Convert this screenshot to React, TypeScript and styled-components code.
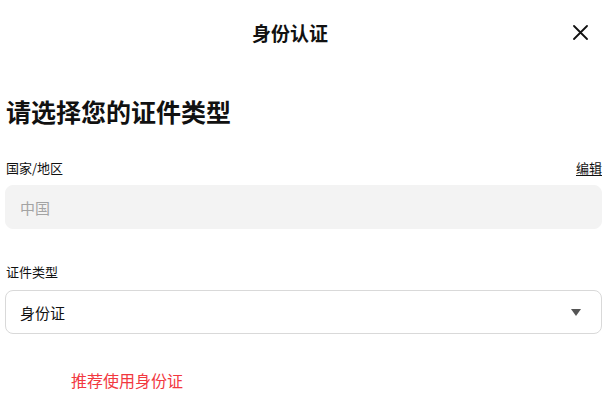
import React, { useState } from 'react';
import styled, { createGlobalStyle } from 'styled-components';

const GlobalStyle = createGlobalStyle`
  html, body {
    margin: 0;
    padding: 0;
    background: #ffffff;
  }
  body {
    font-family: "Noto Sans CJK SC", "Noto Sans", sans-serif;
    color: #1a1a1a;
  }
`;

const Page = styled.div`
  width: 609px;
  min-height: 409px;
  box-sizing: border-box;
  padding: 0 7px 0 5px;
`;

const Header = styled.div`
  display: flex;
  align-items: center;
  height: 64px;
  margin: 0 -7px 0 -5px;
  padding-left: 8px;
`;

const Title = styled.div`
  flex: 1;
  text-align: center;
  font-size: 19px;
  font-weight: 700;
  color: #111;
`;

const CloseButton = styled.button`
  margin-right: 21px;
  width: 16px;
  height: 16px;
  padding: 0;
  border: none;
  background: none;
  cursor: pointer;
  display: flex;
  align-items: center;
  justify-content: center;
  color: #111;
`;

const Heading = styled.h1`
  margin: 29px 0 0 1px;
  font-size: 25px;
  line-height: 36px;
  font-weight: 700;
  color: #111;
`;

const LabelRow = styled.div<{ $gap: number }>`
  display: flex;
  justify-content: space-between;
  align-items: center;
  margin: ${p => p.$gap}px 0 0 1px;
  font-size: 13px;
  line-height: 18px;
  color: #111;
`;

const EditLink = styled.a`
  color: #111;
  text-decoration: underline;
  text-underline-offset: 2px;
  cursor: pointer;
`;

const Field = styled.div<{ $disabled?: boolean; $gap: number }>`
  display: flex;
  align-items: center;
  justify-content: space-between;
  box-sizing: border-box;
  height: 44px;
  margin-top: ${p => p.$gap}px;
  padding: 0 20px 0 14px;
  border-radius: 8px;
  font-size: 15px;
  background: ${p => (p.$disabled ? '#f3f3f3' : '#ffffff')};
  border: 1px solid ${p => (p.$disabled ? '#f3f3f3' : '#d9d9d9')};
  color: ${p => (p.$disabled ? '#a3a3a3' : '#111')};
  cursor: ${p => (p.$disabled ? 'default' : 'pointer')};
`;

const Caret = styled.span`
  width: 0;
  height: 0;
  border-left: 5px solid transparent;
  border-right: 5px solid transparent;
  border-top: 7px solid #555;
`;

const Hint = styled.div`
  margin: 35px 0 0 66px;
  font-size: 16px;
  line-height: 22px;
  color: #f2383f;
`;

const App = () => {
  const [docType] = useState('身份证');

  return (
    <>
      <GlobalStyle />
      <Page>
        <Header>
          <Title>身份认证</Title>
          <CloseButton aria-label="关闭">
            <svg width="15" height="15" viewBox="0 0 15 15" fill="none">
              <path d="M1 1L14 14M14 1L1 14" stroke="currentColor" strokeWidth="1.8" strokeLinecap="round" />
            </svg>
          </CloseButton>
        </Header>
        <Heading>请选择您的证件类型</Heading>
        <LabelRow $gap={30}>
          <span>国家/地区</span>
          <EditLink>编辑</EditLink>
        </LabelRow>
        <Field $disabled $gap={8}>中国</Field>
        <LabelRow $gap={34}>
          <span>证件类型</span>
        </LabelRow>
        <Field $gap={9}>
          <span>{docType}</span>
          <Caret />
        </Field>
        <Hint>推荐使用身份证</Hint>
      </Page>
    </>
  );
};

export default App;
